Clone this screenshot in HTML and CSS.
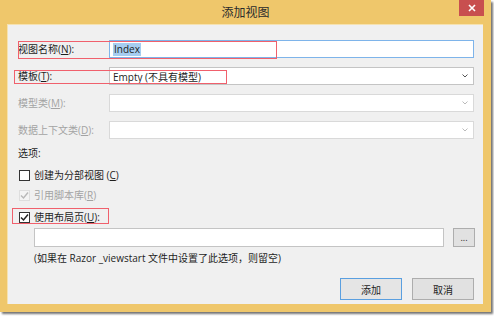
FILE: index.html
```html
<!DOCTYPE html>
<html lang="zh-CN">
<head>
<meta charset="utf-8">
<title>添加视图</title>
<link rel="stylesheet" href="styles.css">
</head>
<body>
<div class="window">
  <div class="titlebar">
    <span></span>
    <span class="title">添加视图</span>
    <span class="close"><svg width="8" height="8" viewBox="0 0 8 8"><path d="M1 1L7 7M7 1L1 7" stroke="#fff" stroke-width="1.6"/></svg></span>
  </div>
  <div class="client">
    <div class="form">
      <label class="lbl">视图名称(<u>N</u>):</label>
      <div class="field field-focus"><span class="sel">Index</span></div>
      <label class="lbl">模板(<u>T</u>):</label>
      <div class="field combo"><span>Empty (不具有模型)</span><svg class="arrow" width="6" height="4" viewBox="0 0 6 4"><path d="M0.5 0.5L3 3L5.5 0.5" fill="none" stroke="#555" stroke-width="1"/></svg></div>
      <label class="lbl dis">模型类(<u>M</u>):</label>
      <div class="field combo disabled"><span></span><svg class="arrow" width="6" height="4" viewBox="0 0 6 4"><path d="M0.5 0.5L3 3L5.5 0.5" fill="none" stroke="#bbb" stroke-width="1"/></svg></div>
      <label class="lbl dis">数据上下文类(<u>D</u>):</label>
      <div class="field combo disabled"><span></span><svg class="arrow" width="6" height="4" viewBox="0 0 6 4"><path d="M0.5 0.5L3 3L5.5 0.5" fill="none" stroke="#bbb" stroke-width="1"/></svg></div>
    </div>
    <div class="section">选项:</div>
    <div class="check-row r1"><span class="box"></span><span>创建为分部视图 (<u>C</u>)</span></div>
    <div class="check-row r2 dis"><span class="box box-dis"><svg width="9" height="9" viewBox="0 0 9 9"><path d="M1 4.5L3.5 7L8 1.5" fill="none" stroke="#b8b8b8" stroke-width="1.4"/></svg></span><span>引用脚本库(<u>R</u>)</span></div>
    <div class="check-row r3"><span class="box"><svg width="9" height="9" viewBox="0 0 9 9"><path d="M1 4.5L3.5 7L8 1.5" fill="none" stroke="#222" stroke-width="1.5"/></svg></span><span>使用布局页(<u>U</u>):</span></div>
    <div class="layout-row">
      <div class="field layout-input"></div>
      <button class="btn browse">...</button>
    </div>
    <div class="hint">(如果在 Razor _viewstart 文件中设置了此选项，则留空)</div>
    <div class="buttons">
      <button class="btn default">添加</button>
      <button class="btn">取消</button>
    </div>
  </div>
  <div class="mark m1"></div>
  <div class="mark m2"></div>
  <div class="mark m3"></div>
</div>
</body>
</html>
```
FILE: styles.css
```css
html, body {
  margin: 0;
  padding: 0;
  background: #ffffff;
}
body {
  width: 494px;
  height: 316px;
  overflow: hidden;
  font-family: "Open Sans", "Noto Sans CJK SC", sans-serif;
  font-size: 10px;
  color: #1e1e1e;
}
.window {
  position: relative;
  width: 491px;
  height: 312px;
  box-sizing: border-box;
  background: #efc76b;
  display: flex;
  flex-direction: column;
  box-shadow: 2px 2px 2px rgba(0,0,0,0.55);
}
.titlebar {
  height: 24px;
  display: grid;
  grid-template-columns: 1fr auto 1fr;
  align-items: center;
}
.title {
  font-size: 12px;
  color: #2b2b2b;
  font-family: "Noto Sans CJK SC", sans-serif;
  margin-top: -1px;
}
.close {
  justify-self: end;
  align-self: start;
  width: 25px;
  height: 16px;
  margin-right: 7px;
  background: #c84f4f;
  display: flex;
  align-items: center;
  justify-content: center;
}
.client {
  flex: 1;
  margin: 0 8px 8px 7px;
  background: #f0f0f0;
  padding: 15px 9px 0 10px;
  box-sizing: border-box;
  border: 1px solid #f6e2b0;
  border-width: 1px 0 0 1px;
}
.form {
  display: grid;
  grid-template-columns: 91px 365px;
  grid-auto-rows: 18px;
  row-gap: 9px;
  align-items: center;
}
.lbl {
  white-space: nowrap;
  line-height: 14px;
}
.dis {
  color: #a3a3a3;
}
.field {
  height: 18px;
  box-sizing: border-box;
  border: 1px solid #ababab;
  background: #fff;
  display: flex;
  align-items: center;
  padding-left: 3px;
  white-space: nowrap;
}
.field-focus {
  border-color: #7eb4ea;
}
.sel {
  background: #a6cdf0;
  padding: 0 1px;
  line-height: 13px;
}
.combo {
  justify-content: space-between;
  padding-right: 5px;
  border-color: #c4c4c4;
}
.combo.disabled {
  border-color: #d9d9d9;
}
.arrow {
  flex: none;
}
.section {
  margin-top: 7px;
  line-height: 14px;
}
.check-row {
  display: flex;
  align-items: center;
  gap: 4px;
  height: 20px;
  margin-left: 1px;
  line-height: 14px;
}
.check-row.r1 { margin-top: 5px; }
.check-row.r3 { margin-top: 2px; }
.box {
  width: 11px;
  height: 11px;
  box-sizing: border-box;
  border: 1px solid #333;
  background: #fff;
  display: flex;
  align-items: center;
  justify-content: center;
  flex: none;
}
.box-dis {
  border-color: #dedede;
  background: #f4f4f4;
}
.layout-row {
  display: flex;
  gap: 9px;
  margin: 1px 0 0 16px;
  height: 19px;
  width: 441px;
}
.layout-input {
  flex: 1;
  height: 19px;
  border-color: #c4c4c4;
}
.btn {
  font: inherit;
  color: #1e1e1e;
  background: #e1e1e1;
  border: 1px solid #adadad;
  padding: 0;
  margin: 0;
  box-sizing: border-box;
}
.browse {
  width: 22px;
  height: 19px;
  font-size: 9px;
  line-height: 10px;
}
.hint {
  margin: 4px 0 0 16px;
  line-height: 14px;
  white-space: nowrap;
}
.buttons {
  display: flex;
  justify-content: flex-end;
  gap: 10px;
  margin-top: 13px;
}
.buttons .btn {
  width: 62px;
  height: 22px;
  font-family: "Noto Sans CJK SC", sans-serif;
}
.btn.default {
  border-color: #5a9fe0;
  background: #e5e5e5;
}
.mark {
  position: absolute;
  border: 1.5px solid #f0606c;
  box-sizing: border-box;
}
.m1 { left: 18px; top: 41px; width: 259px; height: 18px; }
.m2 { left: 14px; top: 70px; width: 213px; height: 14px; }
.m3 { left: 12px; top: 208px; width: 97px; height: 16px; }
```
